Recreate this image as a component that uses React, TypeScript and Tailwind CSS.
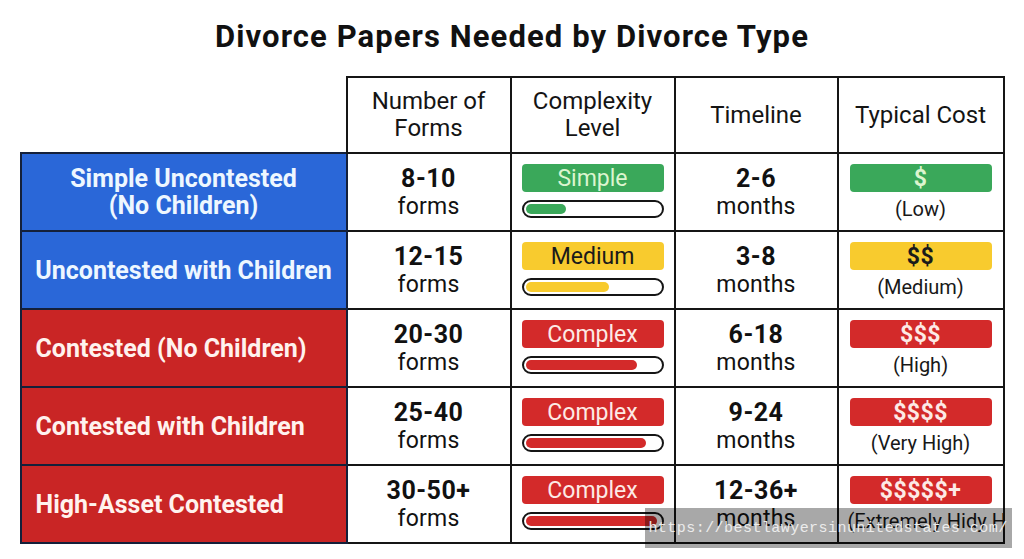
import React from 'react';

type Level = 'simple' | 'medium' | 'complex';

interface Row {
  label: string[];
  align: 'center' | 'left';
  tone: 'blue' | 'red';
  forms: string;
  level: Level;
  fill: number;
  time: string;
  cost: string;
  costNote: string;
}

const rows: Row[] = [
  { label: ['Simple Uncontested', '(No Children)'], align: 'center', tone: 'blue', forms: '8-10', level: 'simple', fill: 30, time: '2-6', cost: '$', costNote: '(Low)' },
  { label: ['Uncontested with Children'], align: 'center', tone: 'blue', forms: '12-15', level: 'medium', fill: 62, time: '3-8', cost: '$$', costNote: '(Medium)' },
  { label: ['Contested (No Children)'], align: 'left', tone: 'red', forms: '20-30', level: 'complex', fill: 83, time: '6-18', cost: '$$$', costNote: '(High)' },
  { label: ['Contested with Children'], align: 'left', tone: 'red', forms: '25-40', level: 'complex', fill: 90, time: '9-24', cost: '$$$$', costNote: '(Very High)' },
  { label: ['High-Asset Contested'], align: 'left', tone: 'red', forms: '30-50+', level: 'complex', fill: 98, time: '12-36+', cost: '$$$$$+', costNote: '(Extremely Hidy High)' },
];

const levelStyle: Record<Level, { badge: string; fill: string; name: string }> = {
  simple: { badge: 'bg-[#3aa85a] text-[#dcf5cf]', fill: 'bg-[#3aa85a]', name: 'Simple' },
  medium: { badge: 'bg-[#f8cb2e] text-[#1a1a1a]', fill: 'bg-[#f8cb2e]', name: 'Medium' },
  complex: { badge: 'bg-[#d32a2a] text-[#fdeae6]', fill: 'bg-[#d32a2a]', name: 'Complex' },
};

const font = { fontFamily: 'Roboto, "Liberation Sans", sans-serif' };

function Badge({ level, children, bold }: { level: Level; children: React.ReactNode; bold?: boolean }) {
  return (
    <div
      className={`mx-auto flex h-[28px] w-[142px] items-center justify-center rounded-[4px] text-[23px] leading-none ${
        levelStyle[level].badge
      } ${bold ? 'font-bold tracking-[0.02em]' : ''}`}
    >
      {children}
    </div>
  );
}

export default function App() {
  return (
    <div className="flex h-[559px] w-[1024px] flex-col items-center overflow-hidden bg-white text-[#111]" style={font}>
      <h1 className="mt-[19px] text-[31px] font-bold leading-[36px] tracking-[0.035em] text-[#111]">
        Divorce Papers Needed by Divorce Type
      </h1>

      <div className="relative mt-[21px]">
        <table className="w-[983px] table-fixed border-collapse">
          <colgroup>
            <col className="w-[326px]" />
            <col className="w-[164px]" />
            <col className="w-[164px]" />
            <col className="w-[163px]" />
            <col className="w-[166px]" />
          </colgroup>
          <thead>
            <tr className="h-[76px]">
              <th className="border-0 p-0" />
              {[['Number of', 'Forms'], ['Complexity', 'Level'], ['Timeline'], ['Typical Cost']].map((h) => (
                <th
                  key={h[0]}
                  className="border-2 border-[#151515] p-0 text-center align-middle text-[24px] font-normal leading-[27px] text-[#141414]"
                >
                  {h.map((line) => (
                    <div key={line}>{line}</div>
                  ))}
                </th>
              ))}
            </tr>
          </thead>
          <tbody>
            {rows.map((r) => {
              const st = levelStyle[r.level];
              return (
                <tr key={r.forms} className="h-[78px]">
                  <td
                    className={`border-2 border-[#14203a] p-0 align-middle text-[25px] font-bold leading-[27px] ${
                      r.tone === 'blue' ? 'bg-[#2a67d8] text-[#eef7ff]' : 'bg-[#c92525] text-[#fff2ee]'
                    } ${r.align === 'center' ? 'text-center' : 'pl-[14px] text-left'}`}
                  >
                    {r.label.map((l) => (
                      <div key={l}>{l}</div>
                    ))}
                  </td>
                  <td className="border-2 border-[#151515] p-0 text-center align-middle">
                    <div className="text-[25px] font-bold leading-[28px] tracking-[0.02em]">{r.forms}</div>
                    <div className="text-[23px] leading-[27px] tracking-[0.01em]">forms</div>
                  </td>
                  <td className="border-2 border-[#151515] px-0 pb-[10px] pt-[10px] align-top">
                    <Badge level={r.level}>{st.name}</Badge>
                    <div className="mx-auto mt-[8px] h-[18px] w-[142px] rounded-full border-2 border-[#151515] bg-white p-[2px]">
                      <div className={`h-full rounded-full ${st.fill}`} style={{ width: `${r.fill}%` }} />
                    </div>
                  </td>
                  <td className="border-2 border-[#151515] p-0 text-center align-middle">
                    <div className="text-[25px] font-bold leading-[28px] tracking-[0.02em]">{r.time}</div>
                    <div className="text-[23px] leading-[27px] tracking-[0.01em]">months</div>
                  </td>
                  <td className="overflow-hidden border-2 border-[#151515] p-0 align-top">
                    <div className="pt-[10px]">
                      <Badge level={r.level} bold>
                        {r.cost}
                      </Badge>
                    </div>
                    <div
                      className={`mt-[4px] whitespace-nowrap text-[20px] leading-[26px] text-[#181818] ${
                        r.cost === '$$$$$+' ? 'pl-[9px] text-left' : 'text-center'
                      }`}
                    >
                      {r.costNote}
                    </div>
                  </td>
                </tr>
              );
            })}
          </tbody>
        </table>

        {/* watermark over the bottom-right corner */}
        <div className="absolute left-[625px] top-[432px] flex h-[40px] w-[367px] items-center justify-center bg-black/[0.34]">
          <span
            className="text-[15px] leading-none tracking-[0.03em] text-[#ececec]"
            style={{ fontFamily: '"Liberation Mono", "DejaVu Sans Mono", monospace' }}
          >
            https://bestlawyersinunitedstates.com/
          </span>
        </div>
      </div>
    </div>
  );
}
